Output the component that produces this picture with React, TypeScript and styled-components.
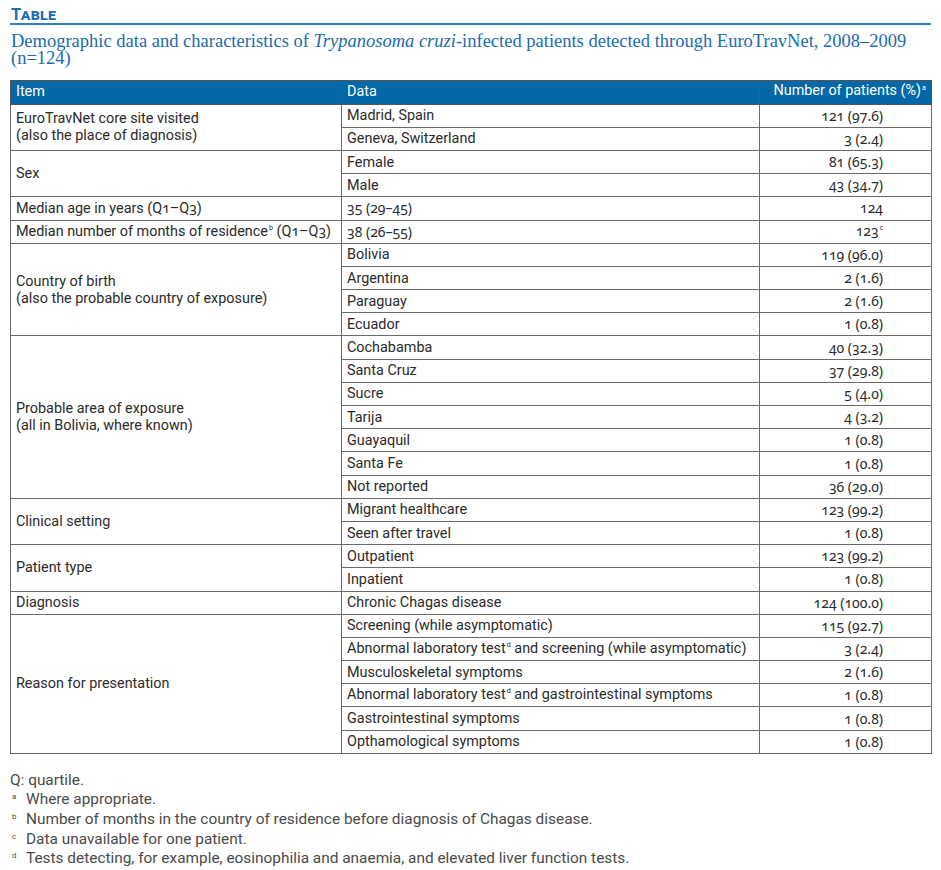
import React from "react";
import styled, { createGlobalStyle } from "styled-components";

const GlobalStyle = createGlobalStyle`
  html, body { margin: 0; padding: 0; background: #ffffff; }
  body { font-family: Roboto, "Liberation Sans", sans-serif; }
`;

type Row = { data: React.ReactNode; value: React.ReactNode };
type Group = { item: React.ReactNode[]; rows: Row[] };

const Sup = styled.sup`
  font-size: 0.5em;
  vertical-align: 0;
  position: relative;
  top: -0.75em;
  margin-left: 1px;
`;

const Num = styled.span`
  font-family: "Noto Sans", Roboto, sans-serif;
  font-variant-numeric: oldstyle-nums;
  font-feature-settings: "onum" 1;
  font-size: 14px;
`;

const groups: Group[] = [
  {
    item: ["EuroTravNet core site visited", "(also the place of diagnosis)"],
    rows: [
      { data: "Madrid, Spain", value: "121 (97.6)" },
      { data: "Geneva, Switzerland", value: "3 (2.4)" },
    ],
  },
  {
    item: ["Sex"],
    rows: [
      { data: "Female", value: "81 (65.3)" },
      { data: "Male", value: "43 (34.7)" },
    ],
  },
  {
    item: [
      <>
        Median age in years (Q<Num>1</Num>–Q<Num>3</Num>)
      </>,
    ],
    rows: [{ data: <Num>35 (29–45)</Num>, value: "124" }],
  },
  {
    item: [
      <>
        Median number of months of residence<Sup>b</Sup> (Q<Num>1</Num>–Q<Num>3</Num>)
      </>,
    ],
    rows: [
      {
        data: <Num>38 (26–55)</Num>,
        value: (
          <>
            123<Sup>c</Sup>
          </>
        ),
      },
    ],
  },
  {
    item: ["Country of birth", "(also the probable country of exposure)"],
    rows: [
      { data: "Bolivia", value: "119 (96.0)" },
      { data: "Argentina", value: "2 (1.6)" },
      { data: "Paraguay", value: "2 (1.6)" },
      { data: "Ecuador", value: "1 (0.8)" },
    ],
  },
  {
    item: ["Probable area of exposure", "(all in Bolivia, where known)"],
    rows: [
      { data: "Cochabamba", value: "40 (32.3)" },
      { data: "Santa Cruz", value: "37 (29.8)" },
      { data: "Sucre", value: "5 (4.0)" },
      { data: "Tarija", value: "4 (3.2)" },
      { data: "Guayaquil", value: "1 (0.8)" },
      { data: "Santa Fe", value: "1 (0.8)" },
      { data: "Not reported", value: "36 (29.0)" },
    ],
  },
  {
    item: ["Clinical setting"],
    rows: [
      { data: "Migrant healthcare", value: "123 (99.2)" },
      { data: "Seen after travel", value: "1 (0.8)" },
    ],
  },
  {
    item: ["Patient type"],
    rows: [
      { data: "Outpatient", value: "123 (99.2)" },
      { data: "Inpatient", value: "1 (0.8)" },
    ],
  },
  {
    item: ["Diagnosis"],
    rows: [{ data: "Chronic Chagas disease", value: "124 (100.0)" }],
  },
  {
    item: ["Reason for presentation"],
    rows: [
      { data: "Screening (while asymptomatic)", value: "115 (92.7)" },
      {
        data: (
          <>
            Abnormal laboratory test<Sup>d</Sup> and screening (while asymptomatic)
          </>
        ),
        value: "3 (2.4)",
      },
      { data: "Musculoskeletal symptoms", value: "2 (1.6)" },
      {
        data: (
          <>
            Abnormal laboratory test<Sup>d</Sup> and gastrointestinal symptoms
          </>
        ),
        value: "1 (0.8)",
      },
      { data: "Gastrointestinal symptoms", value: "1 (0.8)" },
      { data: "Opthamological symptoms", value: "1 (0.8)" },
    ],
  },
];

const notes: { mark: string; text: string }[] = [
  { mark: "a", text: "Where appropriate." },
  { mark: "b", text: "Number of months in the country of residence before diagnosis of Chagas disease." },
  { mark: "c", text: "Data unavailable for one patient." },
  { mark: "d", text: "Tests detecting, for example, eosinophilia and anaemia, and elevated liver function tests." },
];

const Page = styled.div`
  width: 921px;
  padding: 6px 10px 0 10px;
  color: #2b2b2b;
  font-size: 14.4px;
`;

const Heading = styled.h2`
  margin: 0;
  padding: 0 0 0 1px;
  font-family: Roboto, "Liberation Sans", sans-serif;
  font-weight: 700;
  font-variant: small-caps;
  font-size: 16.6px;
  line-height: 17px;
  color: #1c6fb4;
  border-bottom: 2px solid #2f80c4;
  letter-spacing: 0.2px;
`;

const Caption = styled.p`
  margin: 8px 0 0 0;
  padding-left: 1px;
  font-family: "Liberation Serif", "Times New Roman", serif;
  font-size: 18.5px;
  line-height: 16.8px;
  color: #1a6cb0;
  em { font-style: italic; }
`;

const Table = styled.table`
  margin-top: 13px;
  width: 921px;
  border-collapse: collapse;
  table-layout: fixed;
  border: 1px solid #555;
`;

const Col = styled.col<{ $w: number }>`
  width: ${(p) => p.$w}px;
`;

const HeadCell = styled.th<{ $align?: string }>`
  height: 23px;
  padding: 0 5px;
  background: #0268a8;
  color: #ffffff;
  font-weight: 400;
  text-align: ${(p) => p.$align || "left"};
  border: 1px solid #555;
  line-height: 16px;
  white-space: nowrap;
`;

const Cell = styled.td<{ $align?: string; $padRight?: number }>`
  height: 22.2px;
  padding: 0 ${(p) => p.$padRight ?? 5}px 0 5px;
  border: 1px solid #6a6a6a;
  text-align: ${(p) => p.$align || "left"};
  vertical-align: middle;
  line-height: 17px;
  white-space: nowrap;
`;

const ItemLine = styled.div`
  line-height: 17px;
`;

const Notes = styled.div`
  margin-top: 17px;
  color: #4a4a4a;
  font-size: 15.4px;
  line-height: 19.6px;
`;

const NoteLine = styled.div`
  display: flex;
`;

const NoteMark = styled.span`
  width: 14px;
  padding-left: 2px;
  font-size: 8px;
  line-height: 14px;
  flex: none;
`;

export default function App() {
  return (
    <>
      <GlobalStyle />
      <Page>
        <Heading>Table</Heading>
        <Caption>
          Demographic data and characteristics of <em>Trypanosoma cruzi</em>-infected patients detected through EuroTravNet, 2008–2009 (n=124)
        </Caption>
        <Table>
          <colgroup>
            <Col $w={331} />
            <Col $w={418} />
            <Col $w={172} />
          </colgroup>
          <thead>
            <tr>
              <HeadCell>Item</HeadCell>
              <HeadCell>Data</HeadCell>
              <HeadCell $align="right">
                Number of patients (%)<Sup>a</Sup>
              </HeadCell>
            </tr>
          </thead>
          <tbody>
            {groups.map((g, gi) =>
              g.rows.map((r, ri) => (
                <tr key={`${gi}-${ri}`}>
                  {ri === 0 && (
                    <Cell rowSpan={g.rows.length}>
                      {g.item.map((line, li) => (
                        <ItemLine key={li}>{line}</ItemLine>
                      ))}
                    </Cell>
                  )}
                  <Cell>{r.data}</Cell>
                  <Cell $align="right" $padRight={48}>
                    <Num>{r.value}</Num>
                  </Cell>
                </tr>
              ))
            )}
          </tbody>
        </Table>
        <Notes>
          <div>Q: quartile.</div>
          {notes.map((n) => (
            <NoteLine key={n.mark}>
              <NoteMark>{n.mark}</NoteMark>
              <span>{n.text}</span>
            </NoteLine>
          ))}
        </Notes>
      </Page>
    </>
  );
}
